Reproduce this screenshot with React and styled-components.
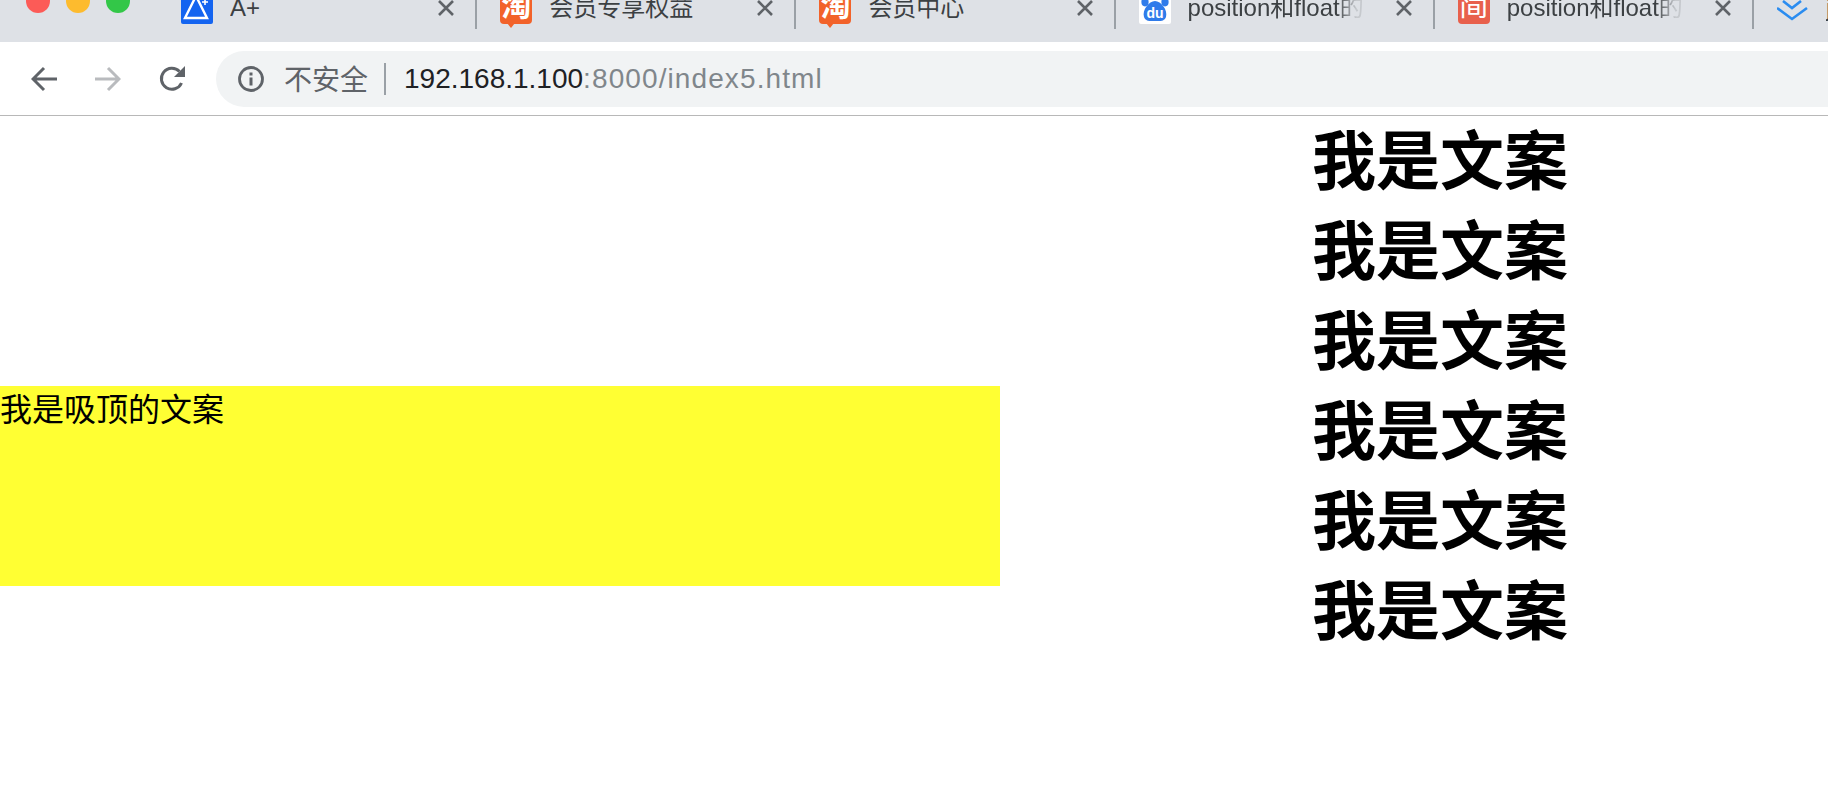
import styled, { createGlobalStyle } from "styled-components";

const GlobalStyle = createGlobalStyle`
  html, body {
    margin: 0;
    padding: 0;
    height: 100%;
    background: #fff;
    overflow: hidden;
  }
  body {
    font-family: "Liberation Sans", "Noto Sans CJK SC", sans-serif;
  }
`;

const Page = styled.div`
  width: 1828px;
  height: 802px;
  overflow: hidden;
`;

const TabStrip = styled.div`
  height: 42px;
  display: flex;
  align-items: flex-start;
  background: #dee1e6;
  overflow: hidden;
`;

const Lights = styled.div`
  flex: none;
  width: 158px;
  box-sizing: border-box;
  display: flex;
  gap: 16px;
  padding-left: 26px;
  margin-top: -11px;
`;

const Light = styled.div`
  width: 24px;
  height: 24px;
  border-radius: 50%;
  background: ${(p) => p.$color};
`;

const Tab = styled.div`
  flex: none;
  width: 319.2px;
  height: 37px;
  margin-top: -8px;
  box-sizing: border-box;
  display: flex;
  align-items: flex-start;
  padding: 0 21px 0 23px;
  gap: 17px;
  border-right: ${(p) => (p.$last ? "none" : "2px solid #9aa0a6")};
`;

const TabTitle = styled.div`
  flex: 1;
  font-size: 24px;
  line-height: 32px;
  color: #3c4043;
  white-space: nowrap;
  overflow: hidden;
  mask-image: ${(p) =>
    p.$fade ? "linear-gradient(to right, #000 78%, rgba(0, 0, 0, 0.15) 88%)" : "none"};
`;

const CloseIcon = styled.svg`
  flex: none;
  width: 16px;
  height: 16px;
  margin-top: 8px;
`;

const FaviconBox = styled.div`
  flex: none;
  position: relative;
  width: 32px;
  height: 32px;
  border-radius: ${(p) => p.$radius || "2px"};
  background: ${(p) => p.$bg};
  color: #fff;
  font-size: 30px;
  font-weight: ${(p) => p.$weight || 700};
  line-height: ${(p) => p.$glyphLine || "28px"};
  text-align: center;
  overflow: visible;
`;

const BubbleTail = styled.div`
  position: absolute;
  left: 7px;
  bottom: -4px;
  width: 0;
  height: 0;
  border-left: 4px solid transparent;
  border-right: 4px solid transparent;
  border-top: 5px solid #f2622a;
`;

const FaviconSvg = styled.svg`
  display: block;
  width: 32px;
  height: 32px;
`;

const Toolbar = styled.div`
  height: 73px;
  display: flex;
  align-items: center;
  padding-left: 31px;
  gap: 38px;
  border-bottom: 1px solid #b8b8b8;
  overflow: hidden;
`;

const NavIcon = styled.svg`
  flex: none;
  width: 26px;
  height: 26px;
`;

const Omnibox = styled.div`
  flex: none;
  width: 1660px;
  height: 56px;
  margin-left: -7px;
  padding-left: 22px;
  box-sizing: border-box;
  display: flex;
  align-items: center;
  border-radius: 28px;
  background: #f1f3f4;
`;

const Security = styled.span`
  margin: -2px 0 0 20px;
  font-size: 28px;
  color: #5f6368;
  white-space: nowrap;
`;

const Divider = styled.div`
  width: 2px;
  height: 32px;
  margin: 0 18px 0 16px;
  background: #9aa0a6;
`;

const Url = styled.div`
  font-size: 28px;
  letter-spacing: 1.1px;
  color: #80868b;
  white-space: nowrap;
`;

const Host = styled.span`
  letter-spacing: 0;
  color: #202124;
`;

const Content = styled.div`
  display: flex;
  align-items: flex-start;
`;

const StickyNote = styled.div`
  flex: none;
  width: 1000px;
  height: 200px;
  margin-top: 270px;
  background: #ffff33;
  font-size: 32px;
  line-height: 48px;
  color: #000;
`;

const Copy = styled.div`
  margin-left: 312px;
  padding-top: 1px;
`;

const CopyLine = styled.div`
  font-size: 64px;
  font-weight: 700;
  line-height: 90px;
  color: #000;
`;

const Close = () => (
  <CloseIcon viewBox="0 0 16 16">
    <path d="M1 1 L15 15 M15 1 L1 15" stroke="#5f6368" strokeWidth="2.6" fill="none" />
  </CloseIcon>
);

const Favicon = ({ kind }) => {
  if (kind === "aplus") {
    return (
      <FaviconBox $bg="#1464f0">
        <FaviconSvg viewBox="0 0 32 32">
          <path d="M15 4 L26 26 L4 26 Z" fill="none" stroke="#fff" strokeWidth="2.4" />
          <path d="M24 7 V13 M21 10 H27" stroke="#fff" strokeWidth="1.6" />
        </FaviconSvg>
      </FaviconBox>
    );
  }
  if (kind === "taobao") {
    return (
      <FaviconBox $bg="#f2622a" $radius="4px">
        淘
        <BubbleTail />
      </FaviconBox>
    );
  }
  if (kind === "baidu") {
    return (
      <FaviconBox $bg="#fff">
        <FaviconSvg viewBox="0 0 32 32">
          <ellipse cx="6" cy="10" rx="3.6" ry="4.4" fill="#2f7bea" />
          <ellipse cx="12.5" cy="3" rx="3.6" ry="4.4" fill="#2f7bea" />
          <ellipse cx="20" cy="3" rx="3.6" ry="4.4" fill="#2f7bea" />
          <ellipse cx="26" cy="10" rx="3.6" ry="4.4" fill="#2f7bea" />
          <path d="M16 9 C22 9 29 18 27 25 C25 30 20 29 16 29 C12 29 7 30 5 25 C3 18 10 9 16 9 Z" fill="#2f7bea" />
          <text x="16" y="26" textAnchor="middle" fontSize="14" fontWeight="700" fill="#fff" fontFamily="Liberation Sans, sans-serif">
            du
          </text>
        </FaviconSvg>
      </FaviconBox>
    );
  }
  if (kind === "jianshu") {
    return (
      <FaviconBox $bg="#e8604c" $radius="4px" $weight={400} $glyphLine="26px">
        简
      </FaviconBox>
    );
  }
  return (
    <FaviconBox $bg="transparent">
      <FaviconSvg viewBox="0 0 32 32">
        <path d="M6 9 L15 16 L24 9" fill="none" stroke="#2a8cf0" strokeWidth="2.6" />
        <path d="M0 16 L15 27 L30 16" fill="none" stroke="#2a8cf0" strokeWidth="2.6" />
      </FaviconSvg>
    </FaviconBox>
  );
};

const tabs = [
  { key: "a", icon: "aplus", title: "A+" },
  { key: "b", icon: "taobao", title: "会员专享权益" },
  { key: "c", icon: "taobao", title: "会员中心" },
  { key: "d", icon: "baidu", title: "position和float的", fade: true },
  { key: "e", icon: "jianshu", title: "position和float的", fade: true },
];

const copyLines = [1, 2, 3, 4, 5, 6];

export default function App() {
  return (
    <Page>
      <GlobalStyle />
      <TabStrip>
        <Lights>
          <Light $color="#fc5b57" />
          <Light $color="#fdbb2e" />
          <Light $color="#33c748" />
        </Lights>
        {tabs.map((tab) => (
          <Tab key={tab.key}>
            <Favicon kind={tab.icon} />
            <TabTitle $fade={tab.fade}>{tab.title}</TabTitle>
            <Close />
          </Tab>
        ))}
        <Tab $last>
          <Favicon kind="chevrons" />
          <TabTitle>jQuery</TabTitle>
        </Tab>
      </TabStrip>
      <Toolbar>
        <NavIcon viewBox="0 0 26 26">
          <path d="M26 13 H3 M13 2 L2 13 L13 24" fill="none" stroke="#5f6368" strokeWidth="3" />
        </NavIcon>
        <NavIcon viewBox="0 0 26 26">
          <path d="M0 13 H23 M13 2 L24 13 L13 24" fill="none" stroke="#b9bbbe" strokeWidth="3" />
        </NavIcon>
        <NavIcon viewBox="0 0 26 26">
          <path d="M22.500 17 A10.500 10.500 0 1 1 20.500 5.500" fill="none" stroke="#5f6368" strokeWidth="3" />
          <path d="M26 0 V11 H15 Z" fill="#5f6368" />
        </NavIcon>
        <Omnibox>
          <NavIcon viewBox="0 0 26 26">
            <circle cx="13" cy="13" r="11.500" fill="none" stroke="#5f6368" strokeWidth="2.8" />
            <path d="M13 11.500 V19.500" stroke="#5f6368" strokeWidth="3" />
            <path d="M13 6.500 V9.500" stroke="#5f6368" strokeWidth="3" />
          </NavIcon>
          <Security>不安全</Security>
          <Divider />
          <Url>
            <Host>192.168.1.100</Host>:8000/index5.html
          </Url>
        </Omnibox>
      </Toolbar>
      <Content>
        <StickyNote>我是吸顶的文案</StickyNote>
        <Copy>
          {copyLines.map((line) => (
            <CopyLine key={line}>我是文案</CopyLine>
          ))}
        </Copy>
      </Content>
    </Page>
  );
}
